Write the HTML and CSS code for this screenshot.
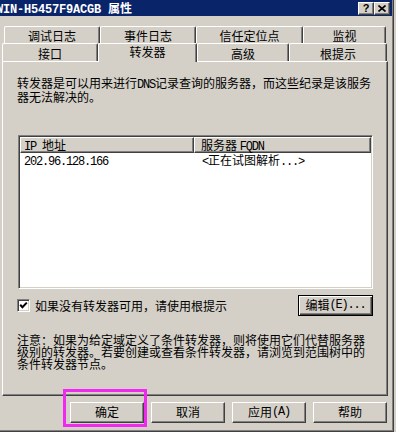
FILE: index.html
```html
<!DOCTYPE html>
<html lang="zh-CN">
<head>
<meta charset="utf-8">
<title>WIN-H5457F9ACGB 属性</title>
<link rel="stylesheet" href="styles.css">
</head>
<body>
<div class="window">
  <div class="titlebar">
    <span class="title"><span class="title-lat">WIN-H5457F9ACGB </span>属性</span>
    <div class="caption-btns">
      <span class="cap-btn help">?</span>
      <span class="cap-btn close">
        <svg width="8" height="7" viewBox="0 0 8 7"><path d="M0.5 0.5 L7.5 6.5 M7.5 0.5 L0.5 6.5" stroke="#000" stroke-width="1.6" fill="none"/></svg>
      </span>
    </div>
  </div>

  <div class="tabs">
    <div class="tab-row back">
      <div class="tab w96">调试日志</div>
      <div class="tab w96">事件日志</div>
      <div class="tab w107">信任定位点</div>
      <div class="tab w83">监视</div>
    </div>
    <div class="tab-row front">
      <div class="tab w96">接口</div>
      <div class="tab w99 selected">转发器</div>
      <div class="tab w92">高级</div>
      <div class="tab w98">根提示</div>
    </div>
  </div>

  <div class="panel">
    <p class="desc">转发器是可以用来进行<span class="lat">DNS</span>记录查询的服务器，而这些纪录是该服务<br>器无法解决的。</p>

    <div class="listbox">
      <div class="list-header">
        <div class="hcell col1"><span class="lat">IP </span>地址</div>
        <div class="hcell col2">服务器 <span class="lat">FQDN</span></div>
      </div>
      <div class="list-row">
        <div class="cell col1"><span class="lat">202.96.128.166</span></div>
        <div class="cell col2"><span class="lat">&lt;</span>正在试图解析<span class="lat">...&gt;</span></div>
      </div>
    </div>

    <div class="opts">
      <span class="checkbox">
        <svg width="9" height="9" viewBox="0 0 9 9"><polyline points="1.2,3.8 3.4,6.2 7.8,1.6" stroke="#000" stroke-width="2" fill="none"/></svg>
      </span>
      <span class="opt-label">如果没有转发器可用，请使用根提示</span>
      <span class="btn btn-default edit">编辑<span class="lat">(E)...</span></span>
    </div>

    <p class="note">注意：如果为给定域定义了条件转发器，则将使用它们代替服务器<br>级别的转发器。若要创建或查看条件转发器，请浏览到范围树中的<br>条件转发器节点。</p>
  </div>

  <div class="actions">
    <span class="btn">确定</span>
    <span class="btn">取消</span>
    <span class="btn">应用<span class="lat">(A)</span></span>
    <span class="btn">帮助</span>
  </div>

  <div class="highlight"></div>
</div>
</body>
</html>
```

FILE: styles.css
```css
* {
  box-sizing: border-box;
}

html,
body {
  margin: 0;
  padding: 0;
}

body {
  width: 396px;
  height: 432px;
  overflow: hidden;
  background: #d4d0c8;
  color: #000;
  font-family: "Noto Sans CJK SC", "Liberation Sans", sans-serif;
  font-size: 12px;
  line-height: 12px;
}

/* half-width latin text, 6px per character like the bitmap font */
.lat {
  font-family: "Liberation Mono", "Noto Sans CJK SC", monospace;
  font-size: 12px;
  letter-spacing: -1.2px;
}

.window {
  position: relative;
  width: 394px;
  height: 432px;
  border-right: 1px solid #404040;
  border-bottom: 1px solid #404040;
  box-shadow: inset -1px -1px #808080;
  display: flex;
  flex-direction: column;
}

/* ---------- title bar ---------- */
.titlebar {
  width: 392px;
  height: 16px;
  background: #0a246a;
  display: flex;
  align-items: flex-start;
  padding: 0 2px 0 0;
}

.title {
  margin: 2px 0 0 -4px;
  color: #fff;
  font-weight: bold;
  white-space: pre;
}

.title-lat {
  font-family: "Liberation Mono", monospace;
  font-size: 12px;
  letter-spacing: -0.2px;
  font-weight: bold;
}

.caption-btns {
  margin-left: auto;
  margin-top: 2px;
  display: flex;
}

.cap-btn {
  width: 16px;
  height: 13px;
  background: #d4d0c8;
  border: 1px solid;
  border-color: #fff #404040 #404040 #fff;
  box-shadow: inset -1px -1px #808080;
  display: flex;
  align-items: center;
  justify-content: center;
}

.cap-btn.help {
  font-family: "Liberation Sans", sans-serif;
  font-weight: bold;
  font-size: 11px;
  line-height: 11px;
  padding-bottom: 1px;
}

.cap-btn.close svg {
  display: block;
  margin-bottom: 1px;
}

/* ---------- tabs ---------- */
.tabs {
  margin-top: 10px;
}

.tab-row {
  display: flex;
}

.tab-row.back {
  margin-left: 4px;
  height: 17px;
}

.tab-row.front {
  margin-left: 2px;
  height: 18px;
}

.tab {
  height: 100%;
  background: #d4d0c8;
  border-top: 1px solid #fff;
  border-left: 1px solid #fff;
  border-right: 1px solid #404040;
  border-top-left-radius: 2px;
  border-top-right-radius: 2px;
  box-shadow: inset -1px 0 #808080;
  text-align: center;
  white-space: nowrap;
}

.back .tab {
  padding-top: 3px;
}

.front .tab {
  padding-top: 4px;
}

.front .tab.selected {
  height: 19px;
  padding-top: 2px;
  z-index: 1;
}

.w83 { width: 83px; }
.w92 { width: 92px; }
.w96 { width: 96px; }
.w98 { width: 98px; }
.w99 { width: 99px; }
.w107 { width: 107px; }

/* ---------- panel ---------- */
.panel {
  margin-left: 2px;
  width: 386px;
  height: 335px;
  border-top: 1px solid #fff;
  border-left: 1px solid #fff;
  border-right: 1px solid #404040;
  border-bottom: 1px solid #404040;
  box-shadow: inset -1px -1px #808080;
  padding: 15px 14px 0 14px;
}

.desc,
.note {
  margin: 0;
  white-space: nowrap;
}

.listbox {
  margin: 32px 0 0 1px;
  width: 355px;
  height: 154px;
  background: #fff;
  border: 1px solid;
  border-color: #808080 #fff #fff #808080;
  box-shadow: inset 1px 1px #404040, inset -1px -1px #d4d0c8;
  padding: 1px;
}

.list-header {
  display: flex;
  height: 16px;
}

.hcell {
  height: 100%;
  background: #d4d0c8;
  border: 1px solid;
  border-color: #fff #404040 #404040 #fff;
  box-shadow: inset -1px -1px #808080;
  padding: 1px 0 0 3px;
  white-space: nowrap;
}

.col1 { width: 174px; }
.col2 { width: 177px; }

.hcell.col2 {
  padding-left: 6px;
}

.list-row {
  display: flex;
  padding-top: 1px;
}

.cell {
  padding-left: 4px;
  white-space: nowrap;
}

.cell.col2 {
  padding-left: 8px;
}

.opts {
  margin-top: 6px;
  height: 21px;
  display: flex;
  align-items: center;
}

.checkbox {
  width: 13px;
  height: 13px;
  background: #fff;
  border: 1px solid;
  border-color: #808080 #fff #fff #808080;
  box-shadow: inset 1px 1px #404040, inset -1px -1px #d4d0c8;
  display: flex;
  align-items: center;
  justify-content: center;
}

.checkbox svg {
  display: block;
}

.opt-label {
  margin-left: 5px;
  white-space: nowrap;
}

.btn {
  width: 74px;
  height: 21px;
  background: #d4d0c8;
  border: 1px solid;
  border-color: #fff #404040 #404040 #fff;
  box-shadow: inset -1px -1px #808080;
  display: flex;
  justify-content: center;
  padding-top: 3px;
  white-space: nowrap;
}

.btn-default {
  border-color: #000;
  box-shadow: inset 1px 1px #fff, inset -1px -1px #404040, inset -2px -2px #808080;
}

.edit {
  margin-left: auto;
  width: 75px;
}

.note {
  margin-top: 18px;
}

/* ---------- bottom buttons ---------- */
.actions {
  width: 387px;
  margin-top: 6px;
  display: flex;
  justify-content: flex-end;
  gap: 7px;
}

/* annotation frame drawn over the OK button */
.highlight {
  position: absolute;
  left: 63px;
  top: 389px;
  width: 84px;
  height: 38px;
  border: 3px solid #f028f0;
}
```
